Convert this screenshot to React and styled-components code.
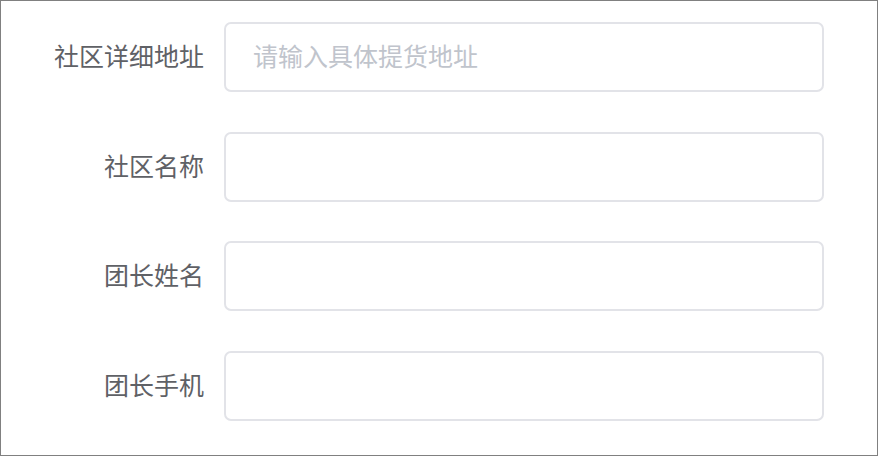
import styled, { createGlobalStyle } from "styled-components";

const GlobalStyle = createGlobalStyle`
  html, body {
    margin: 0;
    padding: 0;
    background: #ffffff;
  }
  * {
    box-sizing: border-box;
  }
`;

const Frame = styled.div`
  width: 878px;
  height: 456px;
  border: 1px solid #808080;
  background: #ffffff;
  padding-top: 21px;
  font-family: "Noto Sans CJK SC", "Noto Sans", sans-serif;
`;

const Form = styled.form`
  display: flex;
  flex-direction: column;
  gap: 39.7px;
  margin: 0;
`;

const Row = styled.div`
  display: flex;
  align-items: center;
  height: 70px;
`;

const Label = styled.label`
  width: 223px;
  padding-right: 20px;
  padding-bottom: 4px;
  text-align: right;
  font-size: 25px;
  line-height: 66px;
  color: #5f6166;
`;

const Input = styled.input`
  width: 600px;
  height: 70px;
  padding: 0 27px 4px;
  border: 2px solid #e2e3e8;
  border-radius: 7px;
  outline: none;
  font-family: inherit;
  font-size: 25px;
  color: #606266;
  background: #ffffff;

  &::placeholder {
    color: #c0c4cc;
  }
`;

const fields = [
  { id: "address", label: "社区详细地址", placeholder: "请输入具体提货地址" },
  { id: "community", label: "社区名称", placeholder: "" },
  { id: "leader", label: "团长姓名", placeholder: "" },
  { id: "phone", label: "团长手机", placeholder: "" },
];

const App = () => {
  return (
    <>
      <GlobalStyle />
      <Frame>
        <Form>
          {fields.map((field) => (
            <Row key={field.id}>
              <Label htmlFor={field.id}>{field.label}</Label>
              <Input id={field.id} placeholder={field.placeholder} />
            </Row>
          ))}
        </Form>
      </Frame>
    </>
  );
};

export default App;
